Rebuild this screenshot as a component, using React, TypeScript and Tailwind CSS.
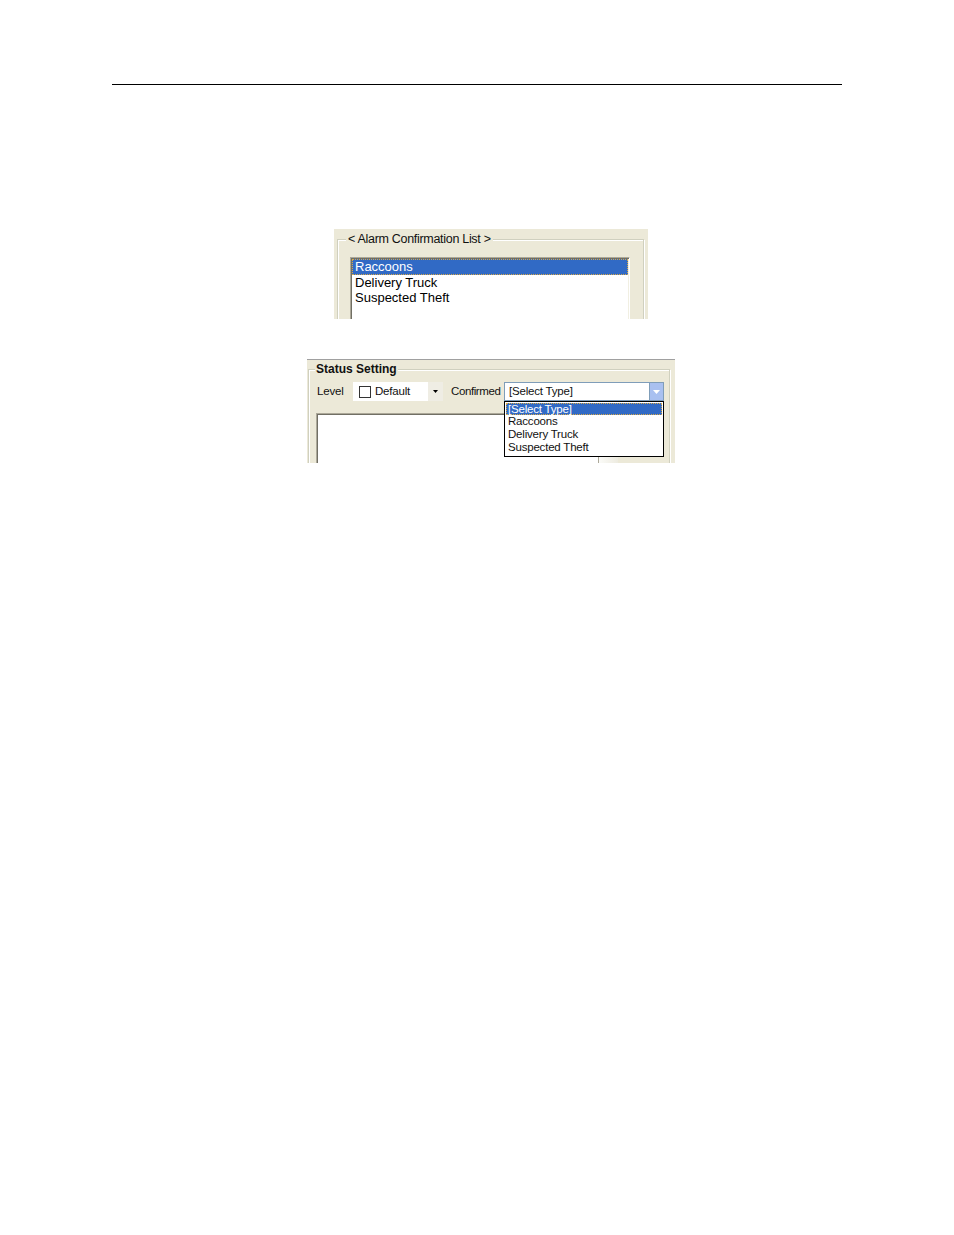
import React from "react";

const sans = "font-['Liberation_Sans','Arial',sans-serif]";

function Shot1() {
  return (
    <div className="ml-[334px] mt-[144px] w-[314px] h-[90px] bg-[#ECE9D8] overflow-hidden pt-[10px] pl-[3px]">
      <div className="relative w-[307px] h-[120px] border border-[#D0D0BF] shadow-[inset_1px_1px_0_#fff,1px_1px_0_#fff] pt-[17px] pl-[12px]">
        <div className="absolute left-[8px] top-[-8px] bg-[#ECE9D8] px-[2px] text-[12.5px] leading-[15px] text-[#111] tracking-[-0.3px]">
          &lt; Alarm Confirmation List &gt;
        </div>
        <div className="w-[280px] h-[90px] bg-white border border-[#ACA899] border-r-white border-b-white shadow-[inset_1px_1px_0_#716F64,inset_-1px_-1px_0_#F1EFE2] p-[1px] text-[13px] leading-[15px] text-black">
          <div className="h-[16px] bg-[#316AC5] text-white border border-dotted border-[#D8A848] pl-[2px] leading-[14px]">Raccoons</div>
          <div className="h-[15px] pl-[3px]">Delivery Truck</div>
          <div className="h-[15px] pl-[3px]">Suspected Theft</div>
        </div>
      </div>
    </div>
  );
}

function TriDown({ color }: { color: string }) {
  return (
    <svg width="7" height="4" viewBox="0 0 7 4">
      <path d="M0 0 H7 L3.5 4 Z" fill={color} />
    </svg>
  );
}

function Shot2() {
  return (
    <div className="ml-[307px] mt-[40px] w-[368px] h-[104px] bg-[#ECE9D8] border-t border-[#A0A0A0] overflow-hidden pt-[9px] pl-[1px]">
      <div className="relative w-[362px] h-[130px] border border-[#D0D0BF] shadow-[inset_1px_1px_0_#fff,1px_1px_0_#fff] pt-[12px] pl-[8px]">
        <div className="absolute left-[6px] top-[-8px] bg-[#ECE9D8] px-[1px] text-[12px] leading-[15px] font-bold text-[#111]">
          Status Setting
        </div>
        <div className="flex items-center h-[19px] text-[12px] text-[#111]">
          <span className="w-[36px] shrink-0 text-[11.5px] tracking-[-0.2px]">Level</span>
          <div className="w-[90px] h-[19px] shrink-0 bg-white flex items-center">
            <div className="ml-[6px] w-[12px] h-[12px] border border-[#333] bg-white" />
            <span className="ml-[4px] text-[11.5px] tracking-[-0.2px]">Default</span>
            <div className="ml-auto w-[15px] h-[19px] bg-[#EFEDE4] flex items-center justify-center">
              <svg width="5" height="3" viewBox="0 0 5 3"><path d="M0 0 H5 L2.5 3 Z" fill="#000" /></svg>
            </div>
          </div>
          <span className="ml-[8px] w-[53px] shrink-0 whitespace-nowrap text-[11.5px] tracking-[-0.4px]">Confirmed</span>
          <div className="relative w-[160px] shrink-0 h-[19px] border border-[#7F9DB9] bg-white flex items-center">
            <span className="ml-[4px] text-[11.5px] tracking-[-0.2px]">[Select Type]</span>
            <div className="ml-auto w-[14px] h-[17px] bg-[#A9C0F0] border-l border-[#7F9DB9] flex items-center justify-center">
              <TriDown color="#fff" />
            </div>
            <div className="absolute left-[-1px] top-[18px] w-[160px] h-[56px] bg-white border border-black p-[1px] text-[11.5px] leading-[13px] z-10">
              <div className="h-[12px] bg-[#316AC5] text-white border border-dotted border-[#D8A848] pl-[1px] leading-[11px] tracking-[-0.2px]">[Select Type]</div>
              <div className="h-[13px] pl-[2px] tracking-[-0.2px]">Raccoons</div>
              <div className="h-[13px] pl-[2px] tracking-[-0.2px]">Delivery Truck</div>
              <div className="h-[13px] pl-[2px] tracking-[-0.2px]">Suspected Theft</div>
            </div>
          </div>
        </div>
        <div className="flex mt-[12px] ml-[-1px]">
          <div className="w-[283px] h-[70px] bg-white border border-[#ACA899] shadow-[inset_1px_1px_0_#716F64]" />
          <div className="w-[19px] h-[70px] bg-gradient-to-r from-[#FBFBF8] to-[#EDEBE0]" />
        </div>
      </div>
    </div>
  );
}

export default function App() {
  return (
    <div className={`w-[954px] h-[1235px] bg-white ${sans} flex flex-col`}>
      <div className="pt-[84px] pl-[112px]">
        <div className="w-[730px] h-px bg-black" />
      </div>
      <Shot1 />
      <Shot2 />
    </div>
  );
}
